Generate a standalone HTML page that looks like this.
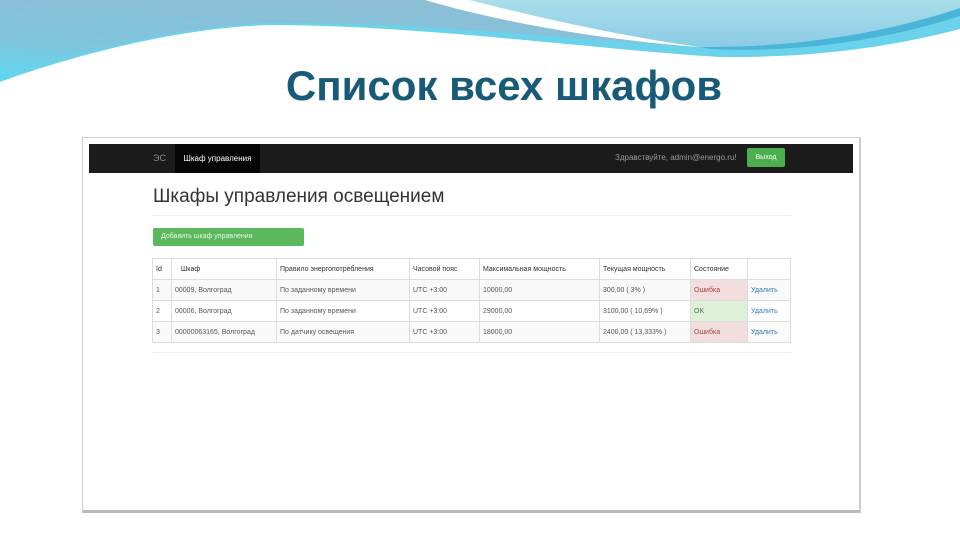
<!DOCTYPE html>
<html><head><meta charset="utf-8"><style>
body{margin:0;width:960px;height:540px;background:#fff;position:relative;overflow:hidden;font-family:"Liberation Sans",sans-serif}
.title{position:absolute;left:0;width:1008px;text-align:center;top:62px;font-size:42px;font-weight:bold;color:#175b78;letter-spacing:0}
.frame{position:absolute;left:82px;top:137px;width:776px;height:372px;border:1px solid #ccc;border-bottom:3px solid #bbb;border-right:2px solid #ccc;background:#fff}
.nav{position:absolute;left:6px;top:6px;width:764px;height:29px;background:#1b1b1b}
.nav .brand{position:absolute;left:64px;top:9px;font-size:9px;color:#888}
.nav .act{position:absolute;left:86px;top:0;width:85px;height:29px;background:#050505;color:#fff;font-size:8px;line-height:29px;text-align:center}
.nav .hi{position:absolute;left:526px;top:9px;font-size:8px;color:#9a9a9a}
.nav .btn{position:absolute;left:658px;top:4px;width:38px;height:19px;background:#4cae4c;color:#fff;font-size:7px;line-height:19px;text-align:center;border-radius:2px}
h1{position:absolute;left:70px;top:48px;margin:0;font-weight:normal;font-size:19px;color:#333}
.hr{position:absolute;left:70px;top:77px;width:638px;height:1px;background:#eee}
.add{position:absolute;left:70px;top:90px;width:151px;height:18px;background:#5cb85c;border-radius:2px;color:#e8f6e8;font-size:7px;line-height:18px;padding-left:8px;box-sizing:border-box}
table{position:absolute;left:69px;top:120px;border-collapse:collapse;font-size:7px;color:#555;table-layout:fixed;width:638px}
td{border:1px solid #ddd;height:20px;padding:0 3px;white-space:nowrap;overflow:hidden}
tr.h td{color:#333}
tr.g td{background:#f9f9f9}
.err{background:#f2dede!important;color:#a94442}
.ok{background:#dff0d8!important;color:#3c763d}
.del{color:#337ab7}
.bl{position:absolute;left:70px;top:214px;width:638px;height:1px;background:#eee}
</style></head><body>
<svg width="960" height="140" style="position:absolute;left:0;top:0">
<defs>
<linearGradient id="a" x1="0" y1="1" x2="0.4" y2="0"><stop offset="0" stop-color="#5fd8f0"/><stop offset="0.45" stop-color="#80c4dc"/><stop offset="1" stop-color="#8cbfd6"/></linearGradient>
<linearGradient id="b" x1="0" y1="0" x2="0" y2="1"><stop offset="0" stop-color="#a8dee8"/><stop offset="1" stop-color="#8ccbe6"/></linearGradient>
</defs>
<path d="M0,0 L960,0 L960,29 C880,50 800,58 720,57 C600,50 420,25 270,25 C170,28 60,60 0,82 Z" fill="#6ad2ea"/>
<path d="M0,0 L425,0 C520,25 610,40 690,47 C560,38 420,22 270,23 C170,26 60,58 0,80 Z" fill="url(#a)"/>
<path d="M470,0 L960,0 L960,8 C880,35 790,48 700,47 C620,36 540,18 470,0 Z" fill="url(#b)"/>
<path d="M700,47 C790,48 880,35 960,8 L960,16 C880,42 790,53 710,49 Z" fill="#4ab5d8"/>
<path d="M425,0 L470,0 C540,18 620,36 700,47 C600,40 500,22 425,0 Z" fill="#fff"/>
</svg>
<div class="title">Список всех шкафов</div>
<div class="frame">
<div class="nav"><span class="brand">ЭС</span><div class="act">Шкаф управления</div><span class="hi">Здравствуйте, admin@energo.ru!</span><div class="btn">Выход</div></div>
<h1>Шкафы управления освещением</h1>
<div class="hr"></div>
<div class="add">Добавить шкаф управления</div>
<table>
<colgroup><col style="width:19px"><col style="width:105px"><col style="width:133px"><col style="width:70px"><col style="width:120px"><col style="width:91px"><col style="width:57px"><col style="width:43px"></colgroup>
<tr class="h"><td>Id</td><td>&nbsp;&nbsp;&nbsp;Шкаф</td><td>Правило энергопотребления</td><td>Часовой пояс</td><td>Максимальная мощность</td><td>Текущая мощность</td><td>Состояние</td><td></td></tr>
<tr class="g"><td>1</td><td>00009, Волгоград</td><td>По заданному времени</td><td>UTC +3:00</td><td>10000,00</td><td>300,00 ( 3% )</td><td class="err">Ошибка</td><td class="del">Удалить</td></tr>
<tr><td>2</td><td>00006, Волгоград</td><td>По заданному времени</td><td>UTC +3:00</td><td>29000,00</td><td>3100,00 ( 10,69% )</td><td class="ok">OK</td><td class="del">Удалить</td></tr>
<tr class="g"><td>3</td><td>00000063165, Волгоград</td><td>По датчику освещения</td><td>UTC +3:00</td><td>18000,00</td><td>2400,00 ( 13,333% )</td><td class="err">Ошибка</td><td class="del">Удалить</td></tr>
</table>
<div class="bl"></div>
</div>
</body></html>
